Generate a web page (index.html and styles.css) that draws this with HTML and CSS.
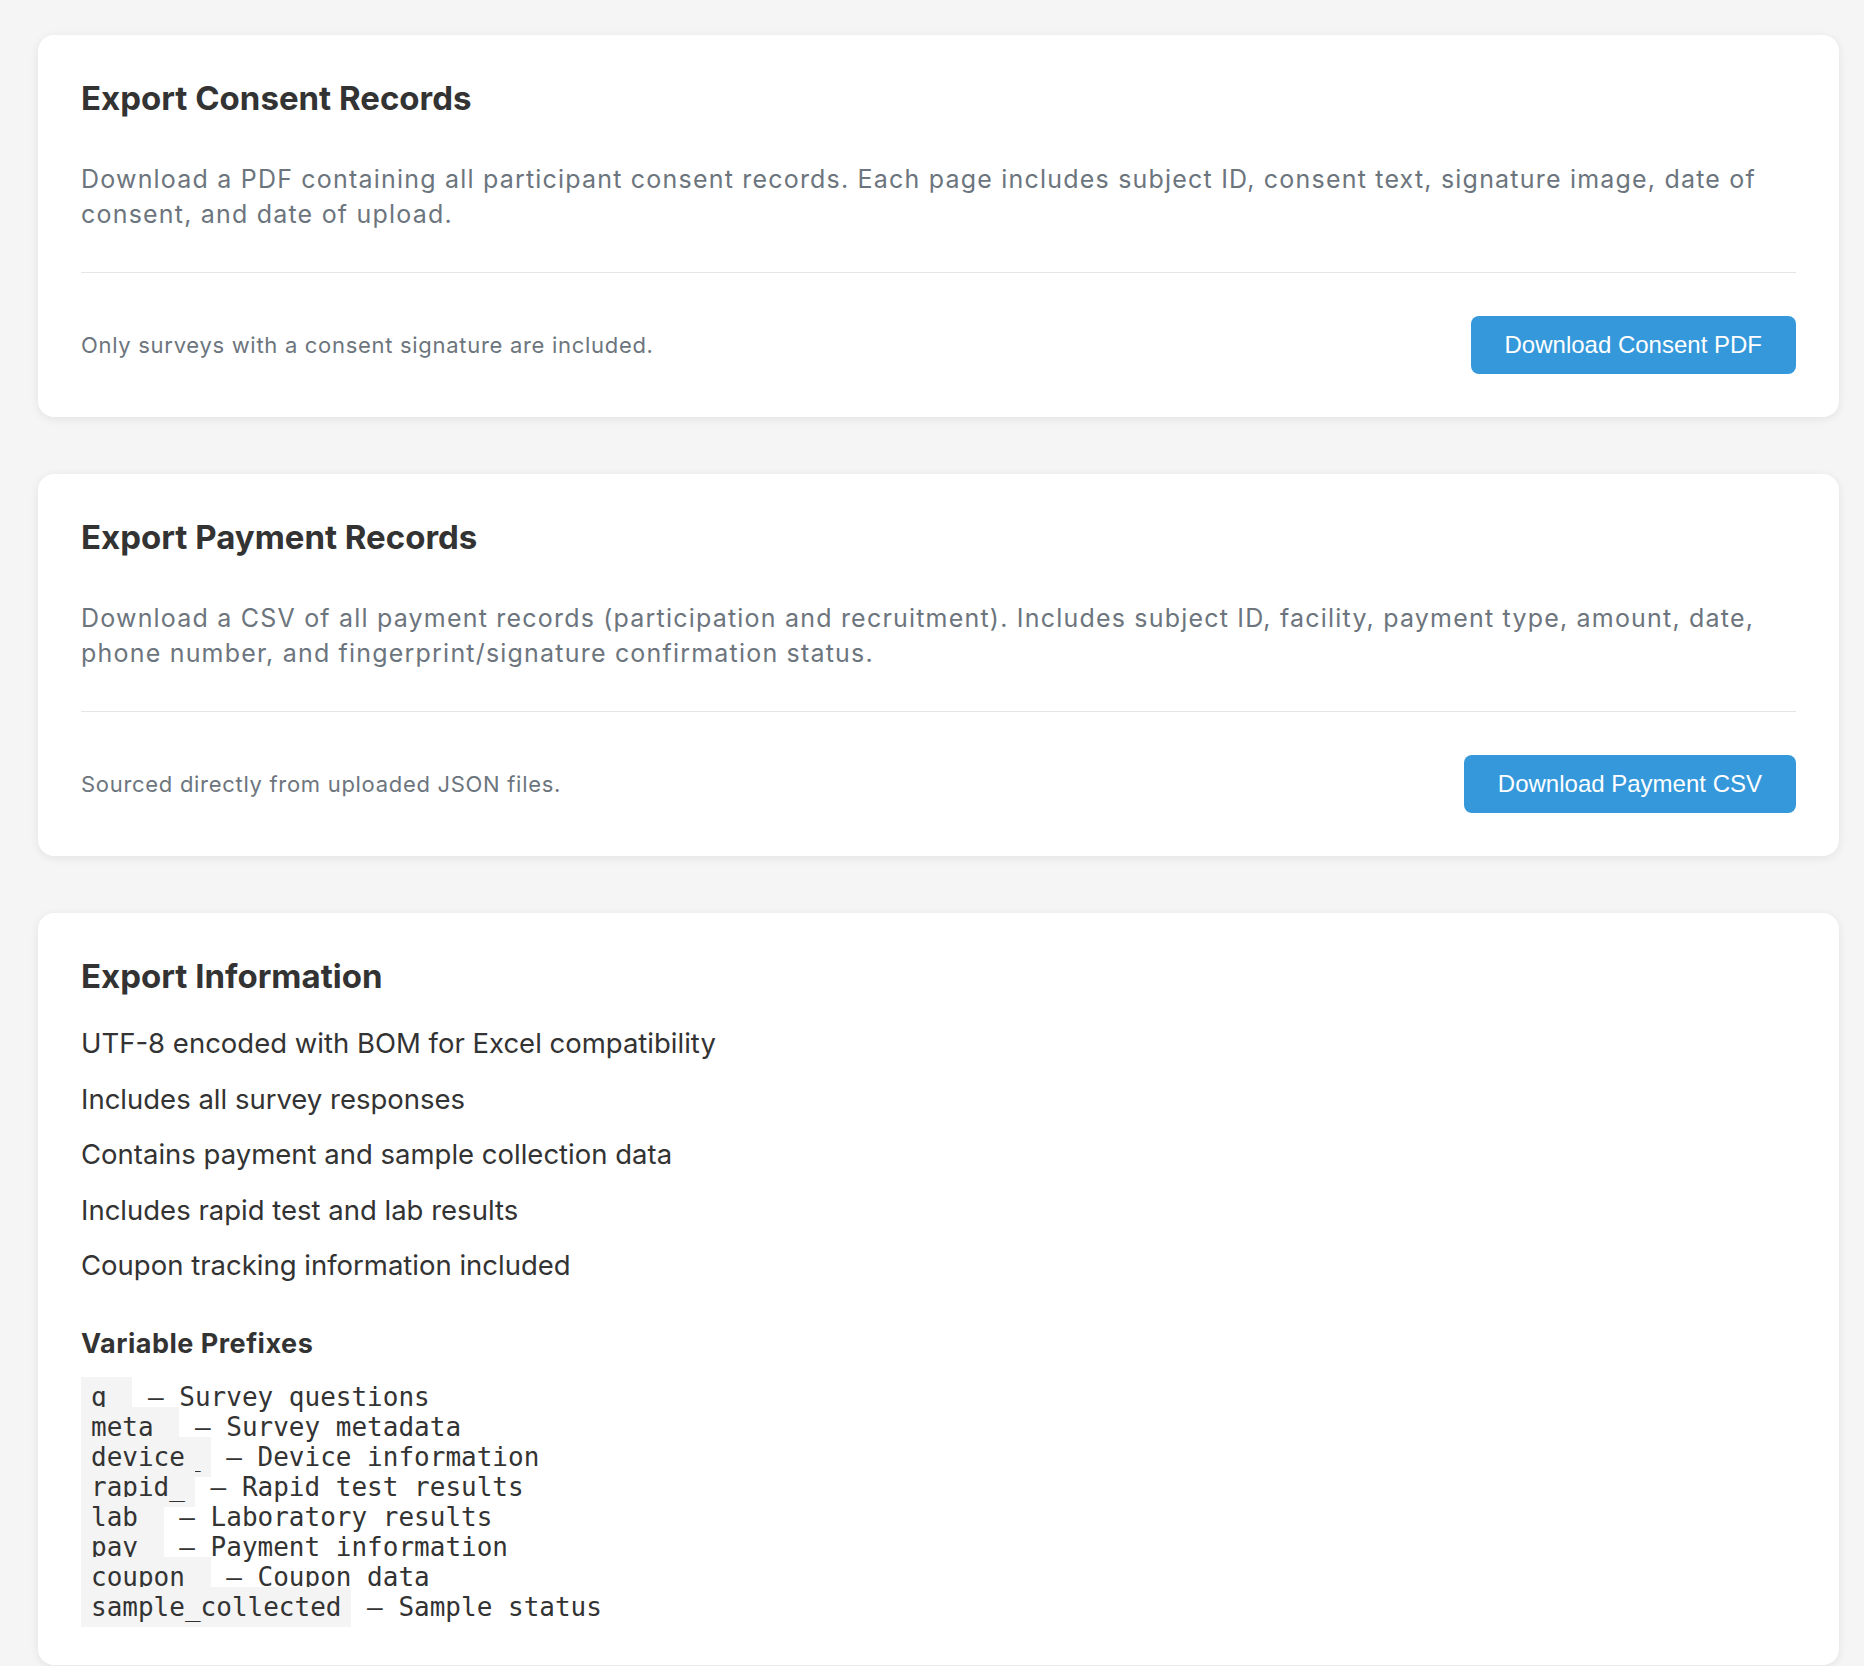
FILE: index.html
```html
<!DOCTYPE html>
<html lang="en">
<head>
    <meta charset="UTF-8">
    <meta name="viewport" content="width=device-width, initial-scale=1.0">
    <title>Data Export</title>
    <link rel="stylesheet" href="styles.css">
</head>
<body>

    <div class="container">

        <!-- Consent PDF export -->
        <section class="card">
            <h2>Export Consent Records</h2>
            <p class="description">Download a PDF containing all participant consent records. Each page includes subject ID, consent text, signature image, date of consent, and date of upload.</p>
            <div class="card-footer">
                <span class="note">Only surveys with a consent signature are included.</span>
                <button class="download-button" id="consentBtn">Download Consent PDF</button>
            </div>
        </section>

        <!-- Payment CSV export -->
        <section class="card">
            <h2>Export Payment Records</h2>
            <p class="description">Download a CSV of all payment records (participation and recruitment). Includes subject ID, facility, payment type, amount, date, phone number, and fingerprint/signature confirmation status.</p>
            <div class="card-footer">
                <span class="note">Sourced directly from uploaded JSON files.</span>
                <button class="download-button" id="paymentBtn">Download Payment CSV</button>
            </div>
        </section>

        <!-- General notes about the exported files -->
        <section class="card info-card">
            <h2>Export Information</h2>
            <ul class="info-list">
                <li>UTF-8 encoded with BOM for Excel compatibility</li>
                <li>Includes all survey responses</li>
                <li>Contains payment and sample collection data</li>
                <li>Includes rapid test and lab results</li>
                <li>Coupon tracking information included</li>
            </ul>

            <h3>Variable Prefixes</h3>
<pre class="prefixes"><code>q_</code> – Survey questions
<code>meta_</code> – Survey metadata
<code>device_</code> – Device information
<code>rapid_</code> – Rapid test results
<code>lab_</code> – Laboratory results
<code>pay_</code> – Payment information
<code>coupon_</code> – Coupon data
<code>sample_collected</code> – Sample status</pre>
        </section>

    </div>

</body>
</html>
```
FILE: styles.css
```css
body {
    font-family: 'Inter', 'Noto Sans', sans-serif;
    background-color: #f5f5f5;
    color: #333;
    margin: 0;
    padding: 0;
}

.container {
    padding: 35px 25px 40px 38px;
}

.card {
    background-color: #fff;
    border-radius: 16px;
    box-shadow: 0 2px 10px rgba(0, 0, 0, 0.08);
    padding: 43px;
    margin-bottom: 57px;
}

h2 {
    font-size: 33px;
    font-weight: 700;
    color: #333;
    margin: 0 0 44px 0;
}

.info-card h2 {
    margin-bottom: 20px;
}

h3 {
    font-size: 27px;
    font-weight: 700;
    letter-spacing: 0.5px;
    color: #333;
    margin: 33px 0 22px 0;
}

.description {
    font-size: 25px;
    letter-spacing: 1.2px;
    line-height: 35px;
    color: #6c757d;
    margin: 0 0 40px 0;
}

.card-footer {
    display: flex;
    justify-content: space-between;
    align-items: center;
    border-top: 1px solid #e5e5e5;
    padding-top: 43px;
}

.note {
    font-size: 22px;
    letter-spacing: 0.7px;
    color: #6c757d;
}

.download-button {
    font-family: 'Liberation Sans', Arial, sans-serif;
    font-size: 24px;
    background-color: #3498db;
    color: white;
    border: none;
    border-radius: 8px;
    min-width: 324px;
    padding: 15px 34px;
    cursor: pointer;
    transition: background-color 0.3s ease;
}

.download-button:hover {
    background-color: #2980b9;
}

.info-list {
    list-style: none;
    margin: 0;
    padding: 0;
}

.info-list li {
    font-size: 27.5px;
    line-height: 35.5px;
    padding: 10px 0;
}

.prefixes {
    font-family: 'DejaVu Sans Mono', monospace;
    font-size: 26px;
    line-height: 30px;
    color: #333;
    margin: 0;
}

.prefixes code {
    background-color: #f4f4f4;
    padding: 5px 10px;
}
```
